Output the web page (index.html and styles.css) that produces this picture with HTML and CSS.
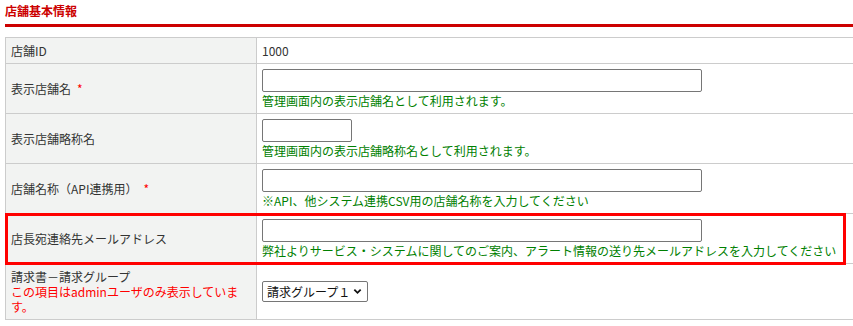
FILE: index.html
```html
<!DOCTYPE html>
<html lang="ja">
<head>
    <meta charset="UTF-8">
    <meta name="viewport" content="width=device-width, initial-scale=1.0">
    <title>店舗基本情報</title>
    <link rel="stylesheet" href="styles.css">
</head>
<body>
    <div class="page">
        <!-- 見出し -->
        <h2 class="section-title">店舗基本情報</h2>

        <!-- 店舗情報テーブル -->
        <table class="info-table">
            <tr>
                <th>店舗ID</th>
                <td class="plain">1000</td>
            </tr>
            <tr>
                <th>表示店舗名<span class="req">*</span></th>
                <td>
                    <input type="text" class="text-long">
                    <p class="help">管理画面内の表示店舗名として利用されます。</p>
                </td>
            </tr>
            <tr>
                <th>表示店舗略称名</th>
                <td>
                    <input type="text" class="text-short">
                    <p class="help">管理画面内の表示店舗略称名として利用されます。</p>
                </td>
            </tr>
            <tr>
                <th>店舗名称（API連携用）<span class="req">*</span></th>
                <td>
                    <input type="text" class="text-long">
                    <p class="help">※API、他システム連携CSV用の店舗名称を入力してください</p>
                </td>
            </tr>
            <tr class="marked">
                <th>店長宛連絡先メールアドレス<span class="mark"></span></th>
                <td>
                    <input type="text" class="text-long">
                    <p class="help">弊社よりサービス・システムに関してのご案内、アラート情報の送り先メールアドレスを入力してください</p>
                </td>
            </tr>
            <tr>
                <th>
                    請求書－請求グループ
                    <p class="admin-note">この項目はadminユーザのみ表示しています。</p>
                </th>
                <td>
                    <span class="select-wrap">
                        <select class="select">
                            <option>請求グループ１</option>
                        </select>
                        <svg class="chevron" viewBox="0 0 10 10" width="9" height="9">
                            <path d="M1.5 3 L5 6.5 L8.5 3" fill="none" stroke="#111" stroke-width="2"/>
                        </svg>
                    </span>
                </td>
            </tr>
        </table>
    </div>
</body>
</html>
```

FILE: styles.css
```css
/* 基本 */
html, body {
    overflow: hidden;
}

body {
    margin: 0;
    background: #fff;
    font-family: "Noto Sans CJK JP", sans-serif;
    font-size: 12px;
    line-height: 15px;
    color: #333;
}

.page {
    width: 880px;
    padding: 0 5px;
}

/* 見出し */
.section-title {
    margin: 0 0 10px;
    padding: 3px 0 6px;
    font-size: 12px;
    line-height: 15px;
    font-weight: bold;
    color: #cc0000;
    border-bottom: 3px solid #cc0000;
}

/* テーブル */
.info-table {
    width: 100%;
    border-collapse: collapse;
    table-layout: fixed;
}

.info-table th,
.info-table td {
    border: 1px solid #ccc;
    padding: 5px;
    text-align: left;
    vertical-align: middle;
}

.info-table th {
    width: 240px;
    font-weight: normal;
    background: #f2f3f2;
    position: relative;
}

.info-table td.plain {
    color: #333;
}

.req {
    color: #ff0000;
    margin-left: 6px;
}

/* 赤枠（注記） */
.mark {
    position: absolute;
    left: -1px;
    top: -1px;
    width: 841px;
    height: 52px;
    box-sizing: border-box;
    border: 3px solid #ff0000;
    pointer-events: none;
    z-index: 2;
}

/* 入力欄 */
.text-long,
.text-short {
    display: block;
    box-sizing: border-box;
    height: 23px;
    margin: 0 0 1px;
    padding: 1px 4px;
    border: 1px solid #767676;
    border-radius: 2px;
    background: #fff;
    font: inherit;
}

.text-long {
    width: 440px;
}

.text-short {
    width: 90px;
}

.help {
    margin: 0;
    color: #008000;
}

.admin-note {
    margin: 0;
    color: #ff0000;
}

/* セレクト */
.select-wrap {
    position: relative;
    display: inline-block;
    vertical-align: middle;
}

.select {
    appearance: none;
    -webkit-appearance: none;
    box-sizing: border-box;
    width: 106px;
    height: 21px;
    padding: 0 0 0 4px;
    border: 1px solid #767676;
    border-radius: 2px;
    background: #fff;
    font-family: inherit;
    font-size: 12px;
    color: #111;
}

.chevron {
    position: absolute;
    right: 6px;
    top: 6px;
    pointer-events: none;
}
```
